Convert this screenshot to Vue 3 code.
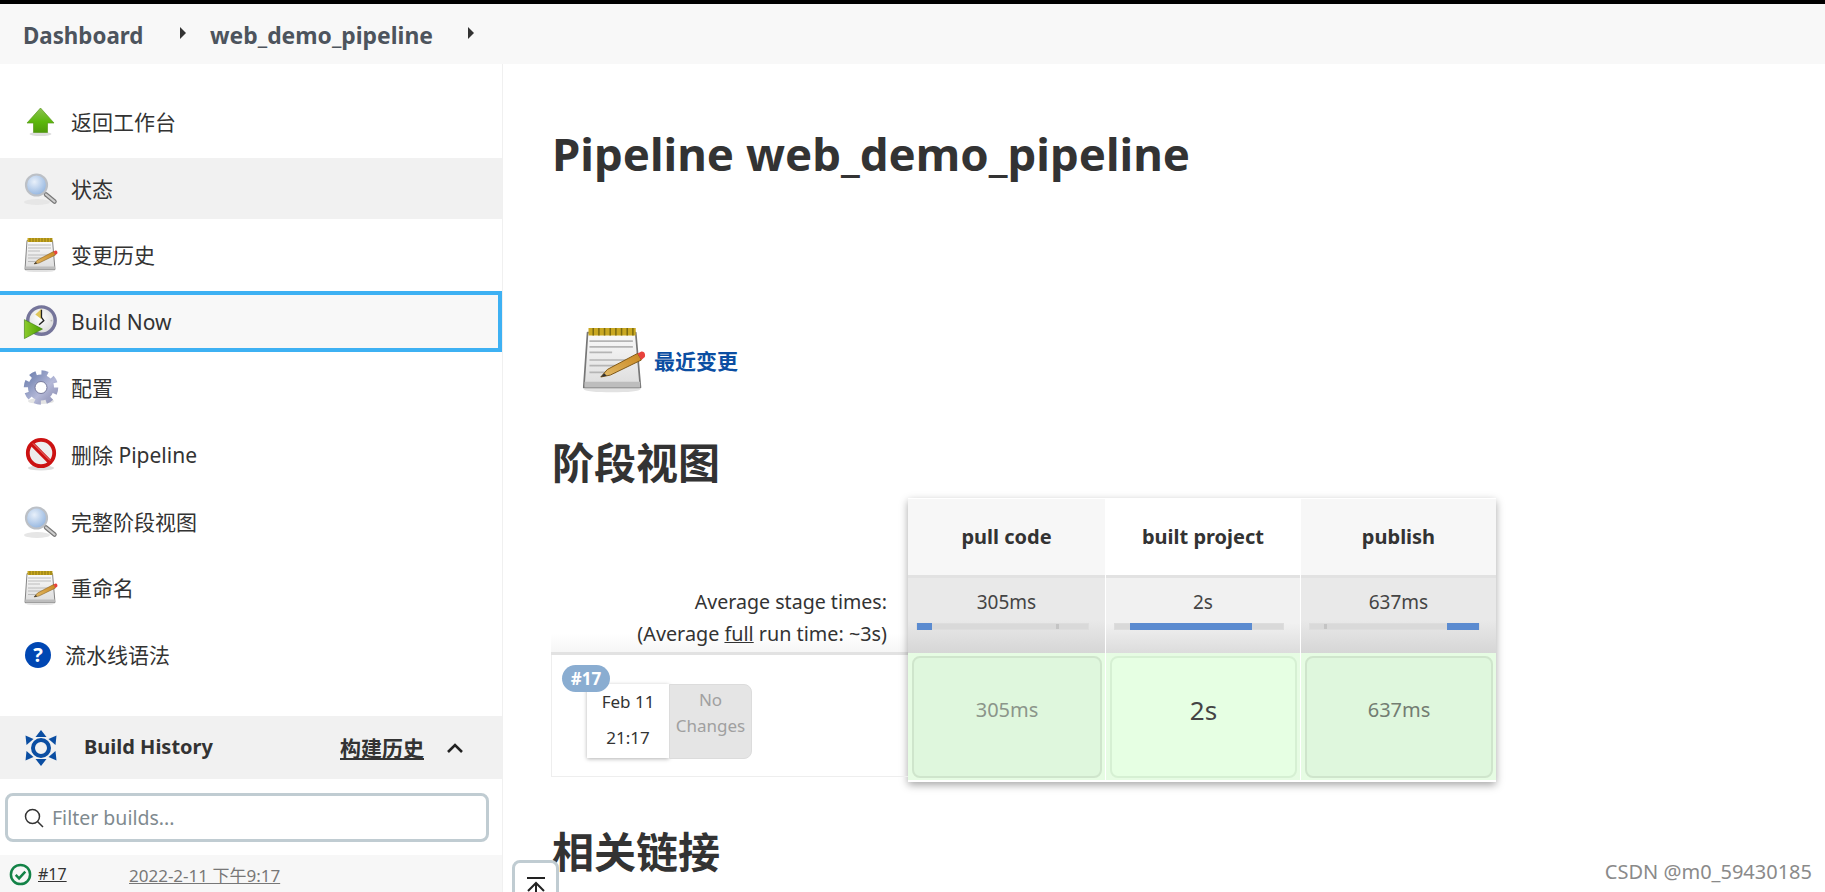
<script setup>
// Sidebar links, stage columns and the one build row
const tasks = [
  { label: '返回工作台', icon: '#i-up' },
  { label: '状态', icon: '#i-search', active: true },
  { label: '变更历史', icon: '#i-notes' },
  { label: 'Build Now', icon: '#i-build', focus: true },
  { label: '配置', icon: '#i-gear' },
  { label: '删除 Pipeline', icon: '#i-stop' },
  { label: '完整阶段视图', icon: '#i-search' },
  { label: '重命名', icon: '#i-notes' }
]

const stages = [
  { name: 'pull code', time: '305ms', left: 0, width: 9, tick: 81, shade: 'dim' },
  { name: 'built project', time: '2s', left: 9, width: 72.5, tick: null, shade: 'lit' },
  { name: 'publish', time: '637ms', left: 81, width: 19, tick: 8, shade: 'mid' }
]
</script>

<template>
  <div class="page">
    <svg class="sprite" width="0" height="0" aria-hidden="true">
      <defs>
        <linearGradient id="g-arrow" x1="0" y1="0" x2="0" y2="1">
          <stop offset="0" stop-color="#8cc152" />
          <stop offset="0.55" stop-color="#5cb80c" />
          <stop offset="1" stop-color="#4f9a0a" />
        </linearGradient>
        <radialGradient id="g-lens" cx="0.4" cy="0.35" r="0.7">
          <stop offset="0" stop-color="#e8f0fa" />
          <stop offset="1" stop-color="#8fb2de" />
        </radialGradient>
        <linearGradient id="g-paper" x1="0" y1="0" x2="0" y2="1">
          <stop offset="0" stop-color="#fafafa" />
          <stop offset="1" stop-color="#dcdcdc" />
        </linearGradient>
        <linearGradient id="g-pencil" x1="0" y1="1" x2="1" y2="0">
          <stop offset="0" stop-color="#e2bb6a" />
          <stop offset="1" stop-color="#c9871f" />
        </linearGradient>
        <linearGradient id="g-gear" x1="0" y1="0" x2="1" y2="1">
          <stop offset="0" stop-color="#6d7fae" />
          <stop offset="0.6" stop-color="#b5b9d8" />
          <stop offset="1" stop-color="#8d90b4" />
        </linearGradient>
        <linearGradient id="g-play" x1="0" y1="0" x2="1" y2="0">
          <stop offset="0" stop-color="#8ccc2c" />
          <stop offset="1" stop-color="#4b9e00" />
        </linearGradient>
        <radialGradient id="g-face" cx="0.45" cy="0.4" r="0.7">
          <stop offset="0" stop-color="#ffffff" />
          <stop offset="1" stop-color="#d4d4d4" />
        </radialGradient>
      </defs>

      <symbol id="i-up" viewBox="0 0 36 36">
        <ellipse cx="17.5" cy="30" rx="11" ry="2" fill="#ddd" />
        <path d="M17.5 4 31 19h-6.5v9.5h-14V19H4z" fill="url(#g-arrow)" stroke="#5a9a1c" stroke-width="0.7" />
      </symbol>

      <symbol id="i-search" viewBox="0 0 36 36">
        <ellipse cx="14" cy="31" rx="13" ry="3" fill="#e6e6e6" />
        <path d="M23 23.5 31.500 30.500" stroke="#777" stroke-width="4.500" stroke-linecap="round" />
        <path d="M23 23.5 31.500 30.500" stroke="#cfcfcf" stroke-width="2.200" stroke-linecap="round" />
        <circle cx="13.5" cy="14" r="10.5" fill="url(#g-lens)" stroke="#bcc0c6" stroke-width="2.200" />
      </symbol>

      <symbol id="i-notes" viewBox="0 0 36 36">
        <ellipse cx="17" cy="33.5" rx="15" ry="1.6" fill="#e2e2e2" />
        <path d="M4 3.5h25.5L32 32.5H2z" fill="url(#g-paper)" stroke="#777" stroke-width="0.9" stroke-linejoin="round" />
        <path d="M2.4 29.5h29.4v3H2.4z" fill="#bdbdbd" />
        <path d="M5 8h23M5 11h23M5 14h12M5 18h23M5 21h20M5 24.500h14" stroke="#b5b5b5" stroke-width="0.9" />
        <path d="M4.500 1h25v4h-25z" fill="#c9a821" />
        <path d="M7 1v4M10 1v4M13 1v4M16 1v4M19 1v4M22 1v4M25 1v4M28 1v4" stroke="#7c6a10" stroke-width="0.8" />
        <path d="M11 27 14.500 23 30.500 14.500 32.500 18 16 26z" fill="url(#g-pencil)" stroke="#7b5310" stroke-width="0.5" />
        <path d="M11 27 12.800 25 14.200 26.400z" fill="#333" />
        <path d="M30.500 14.500 32.500 13.500c1.500-.3 2.300 1.500 1.800 2.900L32.500 18z" fill="#e8413c" />
      </symbol>

      <symbol id="i-build" viewBox="0 0 36 38">
        <circle cx="18.500" cy="17.500" r="14.500" fill="url(#g-face)" stroke="#75759a" stroke-width="3.600" />
        <path d="M18.500 5 12 11l6.500 5z" fill="#e0c65a" />
        <path d="M18.500 6v8l2.500 3.500-5 4.500" fill="none" stroke="#222" stroke-width="1.400" />
        <circle cx="29" cy="17.500" r="1" fill="#bbb" />
        <path d="M.5 16.500 19.500 26.500.5 36.500z" fill="url(#g-play)" stroke="#3f7f10" stroke-width="0.7" />
      </symbol>

      <symbol id="i-gear" viewBox="0 0 36 36">
        <ellipse cx="18" cy="31" rx="13" ry="3" fill="#e4e4e4" />
        <circle cx="18" cy="17.500" r="14.500" fill="none" stroke="url(#g-gear)" stroke-width="5.500" stroke-dasharray="6.200 5.190" />
        <circle cx="18" cy="17.500" r="13" fill="url(#g-gear)" />
        <circle cx="18" cy="17.500" r="6" fill="#fff" stroke="#777a9c" stroke-width="1" />
      </symbol>

      <symbol id="i-stop" viewBox="0 0 36 36">
        <ellipse cx="18" cy="31" rx="13" ry="2.500" fill="#ddd" />
        <circle cx="18" cy="16" r="13.200" fill="#ededed" stroke="#cc1212" stroke-width="3.800" />
        <path d="M8.700 6.700 27.300 25.300" stroke="#cc1212" stroke-width="4.500" />
        <path d="M10 6.500 27 23.500" stroke="#ef7f7f" stroke-width="1" />
      </symbol>

      <symbol id="i-history" viewBox="0 0 36 40">
        <g fill="#0b4ea2">
          <path d="M18 2 12.500 9h11z" />
          <path d="M18 38 12.500 31h11z" />
          <path d="M2.500 7.500 10.500 11 3.500 17z" />
          <path d="M33.500 7.500 25.500 11 32.500 17z" />
          <path d="M2.500 32.500 10.500 29 3.500 23z" />
          <path d="M33.500 32.500 25.500 29 32.500 23z" />
        </g>
        <circle cx="18" cy="20" r="8" fill="none" stroke="#0b4ea2" stroke-width="4" />
      </symbol>
    </svg>

    <div class="topline"></div>

    <nav class="crumbs">
      <a class="crumb crumb-first">Dashboard</a>
      <span class="caret"></span>
      <a class="crumb crumb-job">web_demo_pipeline</a>
      <span class="caret"></span>
    </nav>

    <div class="body">
      <aside class="side">
        <div class="tasks">
          <div
            v-for="t in tasks"
            :key="t.label"
            class="task"
            :class="{ active: t.active, focus: t.focus }"
          >
            <svg class="task-icon"><use :href="t.icon" /></svg>
            <span class="task-label">{{ t.label }}</span>
          </div>
          <div class="task help">
            <span class="help-dot">?</span>
            <span class="task-label">流水线语法</span>
          </div>
        </div>

        <div class="history-head">
          <svg class="history-icon"><use href="#i-history" /></svg>
          <span class="history-title">Build History</span>
          <a class="history-link">构建历史</a>
          <svg class="chevron" viewBox="0 0 18 12">
            <path d="M2 10 9 3l7 7" fill="none" stroke="#222" stroke-width="2.600" />
          </svg>
        </div>

        <div class="filter">
          <svg class="filter-icon" viewBox="0 0 20 20">
            <circle cx="8.500" cy="8.500" r="7" fill="none" stroke="#333" stroke-width="1.500" />
            <path d="M13.500 13.500 19 19" stroke="#333" stroke-width="1.500" />
          </svg>
          <span class="filter-text">Filter builds...</span>
        </div>

        <div class="build-row">
          <svg class="build-ok" viewBox="0 0 24 24">
            <circle cx="12" cy="12" r="10" fill="none" stroke="#138347" stroke-width="2.600" />
            <path d="M7 12.500 10.500 16 17 9" fill="none" stroke="#138347" stroke-width="2.600" />
          </svg>
          <a class="build-num">#17</a>
          <a class="build-date">2022-2-11 下午9:17</a>
        </div>
      </aside>

      <main class="main">
        <h1>Pipeline web_demo_pipeline</h1>

        <div class="changes">
          <svg class="changes-icon"><use href="#i-notes" /></svg>
          <a>最近变更</a>
        </div>

        <h2 class="stage-title">阶段视图</h2>

        <div class="stage-view">
          <div class="runs">
            <div class="runs-head">
              <div>Average stage times:</div>
              <div class="runs-full">(Average <u>full</u> run time: ~3s)</div>
            </div>
            <div class="run">
              <span class="run-badge">#17</span>
              <div class="run-date">
                <div>Feb 11</div>
                <div>21:17</div>
              </div>
              <div class="run-changes">No<br />Changes</div>
            </div>
          </div>

          <div class="stages">
            <div v-for="s in stages" :key="s.name" class="stage" :class="s.shade">
              <div class="stage-name">{{ s.name }}</div>
              <div class="stage-avg">
                <div>{{ s.time }}</div>
                <div class="bar">
                  <span
                    v-if="s.tick !== null"
                    class="bar-tick"
                    :style="{ left: s.tick + '%' }"
                  ></span>
                  <span
                    class="bar-fill"
                    :style="{ left: s.left + '%', width: s.width + '%' }"
                  ></span>
                </div>
              </div>
              <div class="stage-cell">
                <div class="stage-box">{{ s.time }}</div>
              </div>
            </div>
          </div>
        </div>

        <h2 class="links-title">相关链接</h2>
      </main>
    </div>

    <button class="to-top">
      <svg viewBox="0 0 24 24" width="24" height="24">
        <path d="M3 2h18M12 7v17M4 15l8-8 8 8" fill="none" stroke="#222" stroke-width="2" />
      </svg>
    </button>

    <div class="watermark">CSDN @m0_59430185</div>
  </div>
</template>

<style scoped>
.page {
  position: relative;
  height: 892px;
  overflow: hidden;
  background: #fff;
  color: #333;
  font-family: "Noto Sans", "Noto Sans CJK SC", sans-serif;
  font-size: 20px;
}

.sprite {
  position: absolute;
}

.topline {
  height: 4px;
  background: #000;
}

.crumbs {
  display: flex;
  align-items: center;
  height: 60px;
  padding-left: 23px;
  background: #f8f8f8;
  color: #4d545d;
  font-size: 22.9px;
  font-weight: 700;
}

.crumb {
  margin-top: 2px;
}

.crumb-first {
  width: 157px;
  font-size: 22.3px;
}

.crumb-job {
  width: 258px;
  margin-left: 24px;
}

.caret {
  width: 0;
  height: 0;
  margin-top: -2px;
  border-left: 6px solid #333;
  border-top: 6px solid transparent;
  border-bottom: 6px solid transparent;
}

.body {
  display: flex;
}

.side {
  flex: none;
  width: 502px;
  height: 828px;
  border-right: 1px solid #f0f0f0;
}

.tasks {
  display: flex;
  flex-direction: column;
  gap: 5.6px;
  padding-top: 27.5px;
}

.task {
  display: flex;
  align-items: center;
  gap: 12px;
  height: 61px;
  padding-left: 23px;
  box-sizing: border-box;
  font-size: 21px;
  color: #333;
}

.task-label {
  margin-top: -2px;
}

.task.active {
  background: #f1f1f1;
}

.task.focus {
  background: #f8f8f8;
  border: 4px solid #3eb1f3;
  border-left: 0;
}

.task.focus .task-label {
  margin-top: 0;
}

.task-icon {
  width: 36px;
  height: 36px;
  flex: none;
}

.help {
  gap: 14px;
  padding-left: 25px;
}

.help-dot {
  width: 26px;
  height: 26px;
  border-radius: 50%;
  background: #0047b3;
  color: #fff;
  font-size: 20px;
  font-weight: 700;
  line-height: 26px;
  text-align: center;
}

.history-head {
  display: flex;
  align-items: center;
  height: 63px;
  margin-top: 31px;
  padding-left: 23px;
  background: #f1f1f1;
  font-weight: 700;
}

.history-icon {
  width: 36px;
  height: 40px;
  flex: none;
}

.history-title {
  width: 256px;
  margin-left: 25px;
  margin-top: -2px;
  color: #333;
}

.history-link {
  margin-top: -2px;
  color: #333;
  font-size: 21px;
  text-decoration: underline;
}

.chevron {
  width: 18px;
  height: 12px;
  margin-left: 22px;
}

.filter {
  display: flex;
  align-items: center;
  box-sizing: border-box;
  width: 484px;
  height: 49px;
  margin: 14px 0 13px 5px;
  padding-left: 16px;
  border: 3px solid #c0ccd2;
  border-radius: 8px;
}

.filter-icon {
  width: 20px;
  height: 20px;
}

.filter-text {
  margin-left: 8px;
  color: #808a8f;
  font-size: 19.5px;
}

.build-row {
  display: flex;
  align-items: center;
  height: 46px;
  padding: 0 0 8px 9px;
  box-sizing: border-box;
  background: #f7f7f7;
  font-size: 17px;
}

.build-ok {
  width: 23px;
  height: 23px;
  flex: none;
}

.build-num {
  width: 91px;
  margin-left: 6px;
  color: #333;
  font-size: 16px;
  text-decoration: underline;
}

.build-date {
  color: #777;
  text-decoration: underline;
}

.main {
  flex: 1;
  padding-left: 49px;
}

h1,
h2 {
  margin: 0;
  color: #333;
  font-size: 42px;
  font-weight: 700;
  line-height: 54px;
}

h1 {
  margin-top: 62px;
  font-size: 45.6px;
}

.changes {
  display: flex;
  align-items: center;
  height: 67px;
  margin-top: 146px;
  padding-left: 28px;
  color: #0b4ea2;
  font-size: 21px;
  font-weight: 700;
}

.changes-icon {
  width: 68px;
  height: 68px;
  margin-right: 6px;
}

.stage-title {
  margin-top: 43px;
}

.stage-view {
  display: flex;
  margin-top: 8px;
  height: 284px;
}

.runs {
  flex: none;
  width: 357px;
  margin-left: -1px;
}

.runs-head {
  box-sizing: border-box;
  height: 157px;
  padding: 88px 21px 0 0;
  border-bottom: 3px solid #e2e2e2;
  background: linear-gradient(#fff 88%, #f6f6f6);
  font-size: 19.6px;
  line-height: 32px;
  text-align: right;
}

.runs-full {
  font-size: 19.8px;
}

.run {
  position: relative;
  display: flex;
  align-items: flex-start;
  box-sizing: border-box;
  height: 122px;
  padding: 29px 0 0 35px;
  border-left: 1px solid #eee;
  border-bottom: 1px solid #eee;
}

.run-badge {
  position: absolute;
  left: 10px;
  top: 10px;
  width: 48px;
  height: 27px;
  border-radius: 14px;
  background: #8aadd1;
  color: #fff;
  font-size: 17px;
  font-weight: 700;
  line-height: 27px;
  text-align: center;
}

.run-date {
  width: 82px;
  height: 74px;
  box-shadow: 0 1px 4px rgba(0, 0, 0, 0.3);
  font-size: 17px;
  line-height: 36px;
  text-align: center;
}

.run-changes {
  width: 83px;
  height: 75px;
  padding-top: 2px;
  box-sizing: border-box;
  border-radius: 0 8px 8px 0;
  border: 1px solid #dcdcdc;
  background: #e5e5e5;
  color: #a0a0a0;
  font-size: 17px;
  line-height: 26px;
  text-align: center;
}

.stages {
  display: grid;
  flex: none;
  grid-template-columns: 197px 194px 195px;
  column-gap: 1px;
  width: 588px;
  padding: 1px 0;
  box-sizing: border-box;
  background: #fff;
  box-shadow: 0 3px 8px rgba(0, 0, 0, 0.35);
}

.stage-name {
  box-sizing: border-box;
  height: 79px;
  border-bottom: 3px solid #e2e2e2;
  background: #f7f7f7;
  font-size: 20px;
  font-weight: 700;
  line-height: 76px;
  text-align: center;
}

.stage.lit .stage-name {
  background: #fff;
}

.stage-avg {
  box-sizing: border-box;
  height: 75px;
  padding-top: 9px;
  background: linear-gradient(#e9e9e9 55%, #d6d6d6);
  color: #444;
  font-size: 19px;
  line-height: 30px;
  text-align: center;
}

.stage.lit .stage-avg {
  background: linear-gradient(#f1f1f1 60%, #dcdcdc);
}

.bar {
  position: relative;
  height: 5px;
  margin: 6px 16px 0 8px;
  background: #d9d9d9;
  border: 1px solid #ddd;
}

.bar-tick {
  position: absolute;
  top: 0;
  bottom: 0;
  width: 3px;
  background: #c4c4c4;
}

.bar-fill {
  position: absolute;
  top: -1px;
  bottom: -1px;
  background: #5b8bd0;
}

.stage-cell {
  height: 127px;
  padding: 3px 3px 2px 4px;
  box-sizing: border-box;
  background: #e6fce3;
}

.stage-box {
  box-sizing: border-box;
  height: 122px;
  padding-top: 32px;
  border: 2px solid #cfe5cc;
  border-radius: 8px;
  background: #dff7dd;
  color: #8b958a;
  font-size: 20px;
  line-height: 40px;
  text-align: center;
}

.stage.lit .stage-box {
  border-color: #d6f0d3;
  background: #e6ffe3;
  color: #444;
  font-size: 26px;
}

.stage.mid .stage-box {
  color: #737d72;
}

.links-title {
  margin-top: 43px;
}

.to-top {
  position: absolute;
  left: 512px;
  top: 860px;
  width: 47px;
  height: 50px;
  padding: 8px 0 0;
  border: 3px solid #c0ccd2;
  border-radius: 8px;
  background: #fff;
  text-align: center;
}

.watermark {
  position: absolute;
  right: 13px;
  bottom: 7px;
  color: #8a8a8a;
  font-size: 20px;
}
</style>
